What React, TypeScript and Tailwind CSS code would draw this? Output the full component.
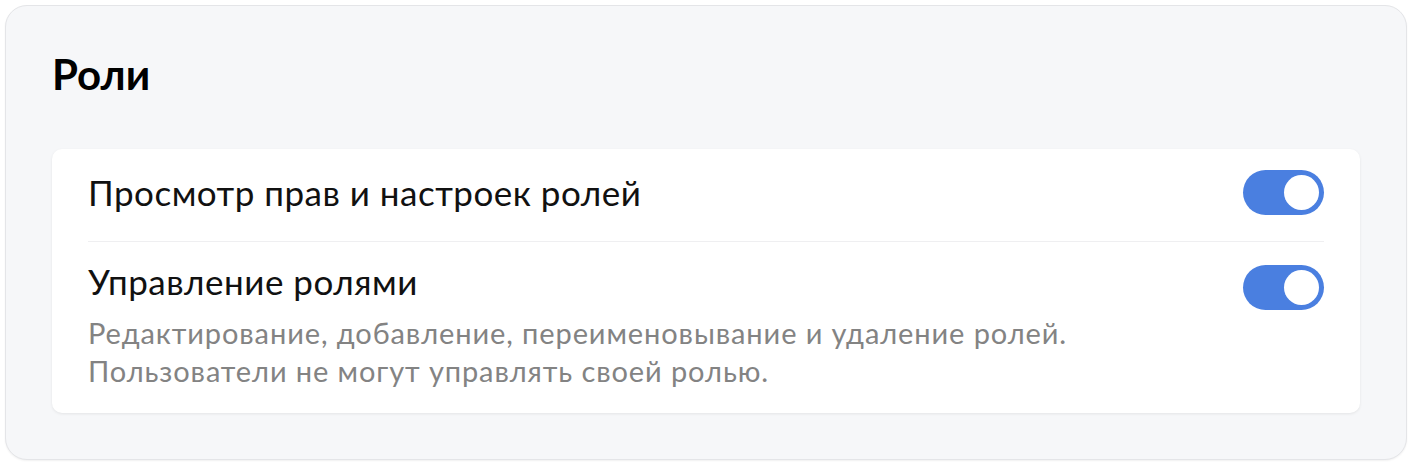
function Toggle({ className = '' }: { className?: string }) {
  return (
    <div className={`flex h-[45px] w-[81px] shrink-0 items-center justify-end rounded-full bg-[#4a7fe0] p-[5px] ${className}`}>
      <div className="h-[35px] w-[35px] rounded-full bg-white" />
    </div>
  )
}

export default function App() {
  return (
    <div className="min-h-screen bg-white p-[5px] font-['Lato',sans-serif]">
      <div className="rounded-[22px] border border-[#e4e5e8] bg-[#f6f7f9] px-[46px] pb-[46px] pt-[43px] shadow-[0_1px_2px_rgba(0,0,0,0.06)]">
        <h1 className="mb-[50px] text-[42px] font-bold leading-[50px] text-black">Роли</h1>
        <div className="rounded-[10px] bg-white px-[36px] shadow-[0_1px_3px_rgba(0,0,0,0.08)]">
          <div className="flex items-center justify-between border-b border-[#efeff1] pb-[26px] pt-[21px]">
            <div className="text-[35px] leading-[45px] tracking-[0.5px] text-[#111]">Просмотр прав и настроек ролей</div>
            <Toggle />
          </div>
          <div className="flex items-start justify-between pb-[23px] pt-[17px]">
            <div>
              <div className="text-[35px] leading-[45px] tracking-[0.5px] text-[#111]">Управление ролями</div>
              <div className="mt-[10px] text-[29px] leading-[38px] tracking-[0.9px] text-[#838383]">
                Редактирование, добавление, переименовывание и удаление ролей.
                <br />
                Пользователи не могут управлять своей ролью.
              </div>
            </div>
            <Toggle className="mt-[6px]" />
          </div>
        </div>
      </div>
    </div>
  )
}
